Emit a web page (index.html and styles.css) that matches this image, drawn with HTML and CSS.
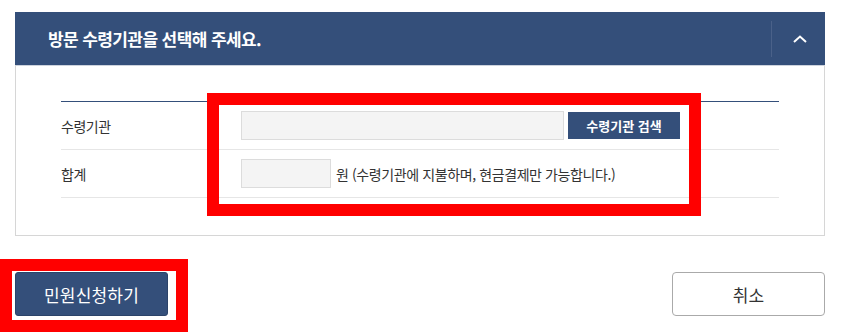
FILE: index.html
```html
<!DOCTYPE html>
<html lang="ko">
<head>
<meta charset="utf-8">
<link rel="stylesheet" href="styles.css">
</head>
<body>
<div class="page">
  <section class="panel">
    <header class="panel-head">
      <h2 class="panel-title">방문 수령기관을 선택해 주세요.</h2>
      <button class="toggle" type="button" aria-label="접기">
        <svg width="14" height="8" viewBox="0 0 14 8"><path d="M1 7 L7 1.5 L13 7" fill="none" stroke="#fff" stroke-width="2"/></svg>
      </button>
    </header>
    <div class="panel-body">
      <div class="form-table">
        <div class="row">
          <div class="label">수령기관</div>
          <div class="field">
            <input class="input input-wide" type="text">
            <button class="search-btn" type="button">수령기관 검색</button>
          </div>
        </div>
        <div class="row">
          <div class="label">합계</div>
          <div class="field">
            <input class="input input-small" type="text">
            <span class="note">원 (수령기관에 지불하며, 현금결제만 가능합니다.)</span>
          </div>
        </div>
      </div>
    </div>
  </section>
  <div class="actions">
    <button class="btn btn-primary" type="button">민원신청하기</button>
    <button class="btn btn-cancel" type="button">취소</button>
  </div>
  <div class="mark mark-1"></div>
  <div class="mark mark-2"></div>
</div>
</body>
</html>
```

FILE: styles.css
```css
* { box-sizing: border-box; }
html, body { margin: 0; padding: 0; background: #fff; }
body {
  font-family: "Noto Sans CJK KR", "Noto Sans", sans-serif;
  color: #333;
}
.page {
  position: relative;
  width: 842px;
  height: 336px;
  padding: 12px 17px 0 15px;
}
.panel {
  width: 810px;
}
.panel-head {
  height: 53px;
  background: #344f7a;
  display: flex;
  align-items: center;
  justify-content: space-between;
}
.panel-title {
  margin: 0 0 0 33px;
  font-size: 17px;
  font-weight: 700;
  letter-spacing: -0.6px;
  color: #fff;
  line-height: 1;
}
.toggle {
  width: 54px;
  height: 36px;
  border: 0;
  border-left: 1px solid #4a6189;
  background: transparent;
  padding: 0;
  display: flex;
  align-items: center;
  justify-content: center;
  padding-left: 2px;
}
.panel-body {
  border: 1px solid #d6d6d6;
  border-top-color: #cdd3dd;
  padding: 35px 45px 37px;
}
.form-table {
  border-top: 1px solid #344f7a;
}
.row {
  display: flex;
  align-items: center;
  height: 48px;
  border-bottom: 1px solid #e6e6e6;
}
.label {
  width: 180px;
  font-size: 14px;
  letter-spacing: -0.5px;
  color: #333;
}
.field {
  display: flex;
  align-items: center;
}
.input {
  height: 29px;
  background: #f4f4f4;
  border: 1px solid #dcdcdc;
  margin: 0;
  padding: 0;
}
.input-wide { width: 323px; }
.input-small { width: 90px; }
.search-btn {
  margin-left: 4px;
  width: 112px;
  height: 27px;
  border: 0;
  background: #344f7a;
  color: #fff;
  font-family: inherit;
  font-size: 13px;
  font-weight: 700;
  letter-spacing: 0;
  padding: 0;
  align-self: flex-start;
  margin-top: 1px;
}
.note {
  margin-left: 5px;
  font-size: 14px;
  letter-spacing: -0.4px;
  color: #333;
}
.actions {
  margin-top: 36px;
  display: flex;
  justify-content: space-between;
  width: 810px;
}
.btn {
  height: 44px;
  font-family: inherit;
  font-size: 17px;
  letter-spacing: 0.2px;
  padding: 0;
}
.btn-primary {
  width: 153px;
  background: #344f7a;
  color: #fff;
  border: 1px solid #2c4369;
  border-radius: 3px;
}
.btn-cancel {
  width: 153px;
  background: #fff;
  color: #333;
  border: 1px solid #aaa;
  border-radius: 4px;
}
.mark {
  position: absolute;
  border: 12px solid #ff0000;
}
.mark-1 { left: 207px; top: 93px; width: 494px; height: 123px; }
.mark-2 { left: 0; top: 259px; width: 188px; height: 73px; }
```
